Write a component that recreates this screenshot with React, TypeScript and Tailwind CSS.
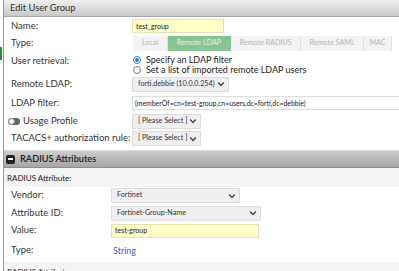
import React from "react";

function Chevron() {
  return (
    <svg width="8" height="6" viewBox="0 0 8 6" className="shrink-0">
      <path d="M1.2 1.6 L4 4.4 L6.8 1.6" fill="none" stroke="#444" strokeWidth="1.4" />
    </svg>
  );
}

function Select({ text, w }: { text: string; w: string }) {
  return (
    <div
      className={`${w} h-[15px] shrink-0 flex items-center justify-between pl-[5px] pr-[3px] bg-[#efeff1] border border-[#dcdcdc] rounded-[1px] text-[7.2px] text-[#333] whitespace-nowrap`}
    >
      <span>{text}</span>
      <Chevron />
    </div>
  );
}

function Radio({ on }: { on: boolean }) {
  return (
    <span
      className={`w-[8px] h-[8px] rounded-full border flex items-center justify-center shrink-0 ${
        on ? "border-[#2f7de1]" : "border-[#777]"
      }`}
    >
      {on ? <span className="w-[4px] h-[4px] rounded-full bg-[#2f7de1]" /> : null}
    </span>
  );
}

export default function App() {
  const tabs = [
    { name: "Local", w: "w-[35px]" },
    { name: "Remote LDAP", w: "w-[63px]", active: true },
    { name: "Remote RADIUS", w: "w-[70px]" },
    { name: "Remote SAML", w: "w-[63px]" },
    { name: "MAC", w: "w-[28px]" },
  ];

  const label = "w-[128px] shrink-0 pl-[7px] whitespace-nowrap";
  const label2 = "w-[107px] shrink-0 pl-[7px] whitespace-nowrap";

  return (
    <div className="relative w-[399px] h-[271px] overflow-hidden bg-white font-['Lato',sans-serif] text-[#333]">
      {/* зелёная метка слева */}
      <div className="absolute left-0 top-[47px] w-[2px] h-[13px] bg-[#2e8b3a]" />

      <div className="ml-[3px] border-l border-[#9a9a9a] h-full flex flex-col">
        {/* Заголовок */}
        <div className="h-[17px] shrink-0 flex items-center pl-[6px] bg-gradient-to-b from-[#f0f0f0] to-[#c9c9c9] border-b border-[#a9a9a9] text-[9.4px] text-[#333]">
          Edit User Group
        </div>

        <div className="flex flex-col text-[9.5px]">
          <div className="h-[18px] flex items-center">
            <span className={label}>Name:</span>
            <div className="w-[92px] h-[14px] shrink-0 bg-[#ffffc6] border border-[#e2e2b4] flex items-center pl-[3px] text-[7px] text-[#222]">
              test_group
            </div>
          </div>

          <div className="h-[17px] flex items-center">
            <span className={label}>Type:</span>
            <div className="flex h-[15px] ml-[1px] shrink-0">
              {tabs.map((t) => (
                <div
                  key={t.name}
                  className={`${t.w} flex items-center justify-center text-[7.2px] border-r whitespace-nowrap ${
                    t.active
                      ? "bg-[#86c593] text-[#e6f4e8] border-[#86c593]"
                      : "bg-[#f3f3f3] text-[#b3b3b3] border-[#e0e0e0]"
                  }`}
                >
                  {t.name}
                </div>
              ))}
            </div>
          </div>

          <div className="h-[23px] flex items-start pt-[2px]">
            <span className={`${label} leading-[11px] mt-[1px]`}>User retrieval:</span>
            <div className="flex flex-col ml-[1px] leading-[10px] text-[9px] text-[#222] whitespace-nowrap">
              <div className="flex items-center gap-[5px] h-[10px] mt-[1px]">
                <Radio on />
                Specify an LDAP filter
              </div>
              <div className="flex items-center gap-[5px] h-[10px]">
                <Radio on={false} />
                Set a list of imported remote LDAP users
              </div>
            </div>
          </div>

          <div className="h-[18px] flex items-center">
            <span className={label}>Remote LDAP:</span>
            <Select text="forti.debbie (10.0.0.254)" w="w-[97px]" />
          </div>

          <div className="h-[20px] flex items-center">
            <span className={label}>LDAP filter:</span>
            <div className="w-[280px] h-[14px] border border-[#dedede] flex items-center pl-[2px] text-[6.9px] text-[#222] shrink-0 whitespace-nowrap">
              (memberOf=cn=test-group,cn=users,dc=forti,dc=debbie)
            </div>
          </div>

          <div className="h-[16px] flex items-center">
            <span className="w-[128px] shrink-0 pl-[4px] flex items-center gap-[3px] whitespace-nowrap">
              <span className="w-[12px] h-[7px] rounded-full bg-[#666] flex items-center">
                <span className="w-[7px] h-[7px] rounded-full bg-[#f4f4f4] border border-[#888]" />
              </span>
              Usage Profile
            </span>
            <Select text="[ Please Select ]" w="w-[69px]" />
          </div>

          <div className="h-[19px] flex items-center">
            <span className={label}>TACACS+ authorization rule:</span>
            <Select text="[ Please Select ]" w="w-[69px]" />
          </div>
        </div>

        {/* RADIUS */}
        <div className="mt-[2px] h-[18px] shrink-0 flex items-center pl-[2px] gap-[5px] bg-gradient-to-b from-[#cdcdcd] to-[#a6a6a6] border-t border-[#dcdcdc] border-b border-b-[#8f8f8f] text-[9.2px] font-semibold text-[#222]">
          <span className="w-[9px] h-[9px] rounded-[2px] bg-[#222] flex items-center justify-center">
            <span className="w-[5px] h-[1.5px] bg-white" />
          </span>
          RADIUS Attributes
        </div>

        <div className="h-[19px] shrink-0 flex items-center pl-[3px] bg-[#f4f4f4] text-[8px] text-[#222]">
          RADIUS Attribute:
        </div>

        <div className="flex flex-col text-[9.5px]">
          <div className="h-[17px] flex items-center">
            <span className={label2}>Vendor:</span>
            <Select text="Fortinet" w="w-[129px]" />
          </div>
          <div className="h-[18px] flex items-center">
            <span className={label2}>Attribute ID:</span>
            <Select text="Fortinet-Group-Name" w="w-[150px]" />
          </div>
          <div className="h-[17px] flex items-center">
            <span className={label2}>Value:</span>
            <div className="w-[148px] h-[14px] shrink-0 bg-[#ffffc6] border border-[#e2e2b4] flex items-center pl-[3px] text-[7px] text-[#222]">
              test-group
            </div>
          </div>
          <div className="h-[23px] flex items-center">
            <span className={label2}>Type:</span>
            <span className="pl-[2px] text-[9px] text-[#3a58e0]">String</span>
          </div>
        </div>

        <div className="h-[19px] shrink-0 flex items-center pl-[3px] bg-[#f4f4f4] text-[8px] text-[#222]">
          RADIUS Attribute:
        </div>
      </div>
    </div>
  );
}
